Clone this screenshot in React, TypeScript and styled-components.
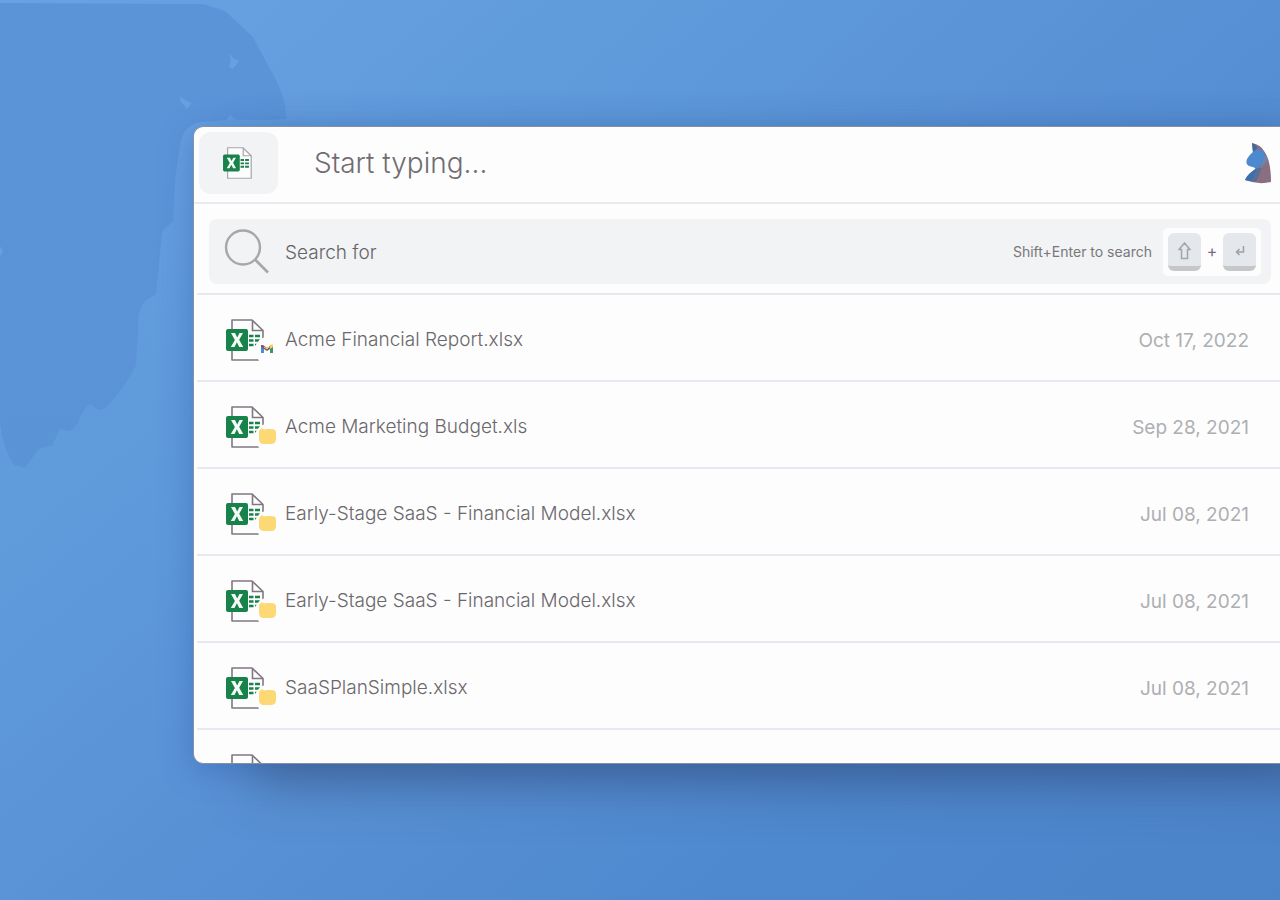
import React from 'react';
import styled, { createGlobalStyle } from 'styled-components';

const GlobalStyle = createGlobalStyle`
  *, *::before, *::after { box-sizing: border-box; }
  html, body, #root { margin: 0; min-height: 100%; }
  body {
    font-family: Inter, "Liberation Sans", sans-serif;
    color: #7b777c;
    background: #5b93d6;
    overflow: hidden;
  }
`;

const Desktop = styled.div`
  position: relative;
  display: flex;
  flex-direction: column;
  min-height: 100vh;
  padding: 126px 0 0 193px;
  overflow: hidden;
  background: linear-gradient(140deg, #68a2e2 0%, #669fe0 14%, #609bdc 25%, #5d98da 36%, #5a92d6 48%, #568fd3 57%, #4e88ce 76%, #4c84c9 100%);
`;

const Wallpaper = styled.svg`
  position: absolute;
  top: 0;
  left: 0;
`;

const Launcher = styled.main`
  position: relative;
  display: flex;
  flex-direction: column;
  max-height: 638px;
  overflow: hidden;
  border: 1px solid #8490a4;
  border-right: 0;
  border-radius: 10px 0 0 10px;
  background: #fdfdfd;
  box-shadow: 60px 22px 48px rgba(56, 78, 122, 0.5), 0 6px 32px rgba(40, 84, 160, 0.4);
`;

const Header = styled.header`
  display: flex;
  align-items: center;
  flex: none;
  height: 77px;
  padding: 0 8px 4px 5px;
  border-bottom: 2px solid #e8ebf0;
`;

const FilterChip = styled.button`
  display: flex;
  align-items: center;
  justify-content: center;
  width: 79px;
  height: 62px;
  padding: 0 2px 0 0;
  border: 0;
  border-radius: 12px;
  background: #f1f3f5;
`;

const QueryInput = styled.input`
  flex: 1;
  min-width: 0;
  height: 48px;
  margin-left: 36px;
  padding: 0;
  border: 0;
  outline: 0;
  background: transparent;
  font: 300 28px/36px Inter, "Liberation Sans", sans-serif;
  color: #716c72;
  &::placeholder { color: #716c72; opacity: 1; }
`;

const SearchSection = styled.section`
  flex: none;
  padding: 15px 9px 9px 15px;
`;

const SearchAction = styled.button`
  display: flex;
  align-items: center;
  width: 100%;
  height: 65px;
  padding: 0 10px 0 15px;
  border: 0;
  border-radius: 8px;
  background: #f1f3f5;
  font: 300 19px/24px Inter, "Liberation Sans", sans-serif;
  color: #676367;
  text-align: left;
`;

const ActionLabel = styled.span`
  flex: 1;
  margin-left: 16px;
  padding-top: 2px;
`;

const Hint = styled.span`
  margin-right: 11px;
  font-size: 14px;
  font-weight: 400;
  line-height: 16px;
  color: #7a777b;
`;

const Shortcut = styled.span`
  display: flex;
  align-items: center;
  justify-content: space-between;
  width: 98px;
  height: 48px;
  padding: 0 5px;
  border-radius: 5px;
  background: #fdfdfd;
  font-size: 16px;
  font-weight: 400;
  color: #7a6c7c;
`;

const Plus = styled.span`
  padding-bottom: 2px;
`;

const Key = styled.kbd`
  display: flex;
  align-items: center;
  justify-content: center;
  width: 33px;
  height: 38px;
  padding-top: 3px;
  border-bottom: 5px solid #c5c7c9;
  border-radius: 6px;
  background: #e4e7eb;
`;

const Results = styled.ul`
  flex: 1;
  min-height: 0;
  margin: 0 0 0 3px;
  padding: 0;
  list-style: none;
`;

const ResultLink = styled.a`
  display: flex;
  align-items: center;
  height: 87px;
  padding: 5px 31px 0 27px;
  border-top: 2px solid #e6e9f0;
  color: inherit;
  text-decoration: none;
  line-height: 24px;
`;

const IconSlot = styled.span`
  position: relative;
  display: flex;
  width: 52px;
  margin-left: 2px;
`;

const Badge = styled.svg`
  position: absolute;
  left: 30px;
  top: 22px;
  overflow: visible;
`;

const FileName = styled.span`
  flex: 1;
  margin-left: 7px;
  font-size: 19px;
  font-weight: 300;
  color: #6b676c;
`;

const FileDate = styled.time`
  padding-top: 2px;
  font-size: 19px;
  font-weight: 400;
  color: #adafb2;
`;

type Source = 'gmail' | 'folder';

function ExcelIcon({ width, height, line }: { width: number; height: number; line: string }) {
  return (
    <svg width={width} height={height} viewBox="0 0 38 42" fill="none" aria-hidden="true">
      <path d="M6 1H26L37 11.500V41H6Z" fill="#fdfdfd" stroke={line} strokeWidth="1.600" strokeLinejoin="round" />
      <path d="M26.500 1V11.500H37" stroke={line} strokeWidth="1.600" />
      <rect x="0" y="10" width="22" height="22" rx="2" fill="#178249" />
      <path d="M23 17h4.500M29 17h5M23 21.500h4.500M29 21.500h5M23 26h4.500M29 26h5" stroke="#178249" strokeWidth="2.600" />
      <path d="M5 14H9L11.200 18.500L13.500 14H17L13.200 20.800L17.200 28H13.200L10.900 23.300L8.500 28H4.800L8.900 20.900Z" fill="#f5fbf7" />
    </svg>
  );
}

function SourceBadge({ source }: { source: Source }) {
  return (
    <Badge width="22" height="22" viewBox="0 0 22 22" aria-hidden="true">
      <path d="M9 -4L4 -2L-1 5V11L3 20H12V-4Z" fill="#fdfdfd" />
      {source === 'gmail' ? (
        <g>
          <path d="M5 5H8V12H5Z" fill="#4b8ddb" />
          <path d="M14 6H17V12H14Z" fill="#389762" />
          <path d="M5 6V4L7 4L11 7L15 4L17 4V6L11 10Z" fill="#7c5969" />
          <path d="M13.500 5L15 3.500H17V6L14 8Z" fill="#fbcf5b" />
          <path d="M8 6L11 8L13 6" stroke="#fbd36a" strokeWidth="1" fill="none" />
        </g>
      ) : (
        <path d="M3 4Q3 2 5 1L6 0L8 1.500L11 1Q18 0.500 19 2Q20 3 20 5V11Q20 16 15 16H8Q3 16 3 11Z" fill="#fdd975" />
      )}
    </Badge>
  );
}

function SearchIcon() {
  return (
    <svg width="45" height="46" viewBox="0 0 45 46" fill="none" stroke="#a7a7a8" aria-hidden="true">
      <circle cx="19" cy="18.500" r="17" strokeWidth="2.400" />
      <path d="M31 30.500L44 43.500" strokeWidth="2.600" />
    </svg>
  );
}

function HorseLogo() {
  return (
    <svg width="28" height="42" viewBox="0 0 28 42" role="img" aria-label="Launcher logo">
      <path d="M8 1Q17 3 20 9Q27 18 27 40Q14 43 1 38Q4 32 10 28L20 15L9 10Z" fill="#896f80" />
      <path d="M8 1Q11 2 13 5L12 9L9 11Z" fill="#41699e" />
      <path d="M10 9Q16 5 20 10Q23 15 19 21L13 27Q10 25 5 24Q1 22 3 17Q5 13 10 9Z" fill="#4c89cf" />
      <path d="M18 21L21 12L24 18L16 28Z" fill="#6b86a9" />
      <path d="M14 26L8 39Q4 39 1 38Q4 31 14 26Z" fill="#3b70af" />
      <path d="M14 26L8 39L12 40L18 26Z" fill="#596f98" />
    </svg>
  );
}

function ShiftIcon() {
  return (
    <svg width="13" height="18" viewBox="0 0 13 18" fill="none" stroke="#a4a5a6" strokeWidth="1.500" aria-hidden="true">
      <path d="M6.500 1L12 7.500H9.500V16.500H3.500V7.500H1Z" />
    </svg>
  );
}

function EnterIcon() {
  return (
    <svg width="10" height="12" viewBox="0 0 10 12" fill="none" stroke="#9fa0a1" strokeWidth="1.500" aria-hidden="true">
      <path d="M8.500 1V7H2M4.500 4L1.500 7L4.500 10" />
    </svg>
  );
}

const files: { name: string; date: string; iso: string; source: Source }[] = [
  { name: 'Acme Financial Report.xlsx', date: 'Oct 17, 2022', iso: '2022-10-17', source: 'gmail' },
  { name: 'Acme Marketing Budget.xls', date: 'Sep 28, 2021', iso: '2021-09-28', source: 'folder' },
  { name: 'Early-Stage SaaS - Financial Model.xlsx', date: 'Jul 08, 2021', iso: '2021-07-08', source: 'folder' },
  { name: 'Early-Stage SaaS - Financial Model.xlsx', date: 'Jul 08, 2021', iso: '2021-07-08', source: 'folder' },
  { name: 'SaaSPlanSimple.xlsx', date: 'Jul 08, 2021', iso: '2021-07-08', source: 'folder' },
];

export default function App() {
  return (
    <>
      <GlobalStyle />
      <Desktop>
        <Wallpaper width="300" height="480" viewBox="0 0 300 480" aria-hidden="true">
          <defs>
            <linearGradient id="shade" x1="0" y1="0" x2="0" y2="1">
              <stop offset="0" stopColor="#5b95d8" />
              <stop offset="1" stopColor="#5a94d7" />
            </linearGradient>
          </defs>
          <path
            d="M0 3L203 4L225 11L253 37L277 82Q287 103 286 119L270 120L237 120L230 115L226 120L201 122Q184 124 180 145L175 181L173 221L162 232L156 294L144 302Q137 311 138 330L136 365Q128 383 109 404Q102 412 97 409L90 404Q84 407 78 423Q72 432 67 431L60 429L52 446L44 447L38 450L25 468L14 465Q3 449 0 423Z"
            fill="url(#shade)"
          />
          <path d="M229 53L233 58L239 61L233 69L229 67L231 61Z M179 96L187 101L192 103L187 109L182 103Z M0 246L3 252L0 256Z" fill="#67a1e1" />
        </Wallpaper>
        <Launcher>
          <Header>
            <FilterChip type="button" aria-label="Excel files">
              <ExcelIcon width={29} height={32} line="#aaa5aa" />
            </FilterChip>
            <QueryInput type="text" placeholder="Start typing..." aria-label="Start typing" />
            <HorseLogo />
          </Header>
          <SearchSection>
            <SearchAction type="button">
              <SearchIcon />
              <ActionLabel>Search for</ActionLabel>
              <Hint>Shift+Enter to search</Hint>
              <Shortcut>
                <Key aria-label="Shift"><ShiftIcon /></Key>
                <Plus>+</Plus>
                <Key aria-label="Enter"><EnterIcon /></Key>
              </Shortcut>
            </SearchAction>
          </SearchSection>
          <Results>
            {files.map((file, index) => (
              <li key={index}>
                <ResultLink href="#">
                  <IconSlot>
                    <ExcelIcon width={38} height={42} line="#807781" />
                    <SourceBadge source={file.source} />
                  </IconSlot>
                  <FileName>{file.name}</FileName>
                  <FileDate dateTime={file.iso}>{file.date}</FileDate>
                </ResultLink>
              </li>
            ))}
            <li>
              <ResultLink href="#" aria-label="Next file">
                <IconSlot>
                  <ExcelIcon width={38} height={42} line="#807781" />
                </IconSlot>
              </ResultLink>
            </li>
          </Results>
        </Launcher>
      </Desktop>
    </>
  );
}
